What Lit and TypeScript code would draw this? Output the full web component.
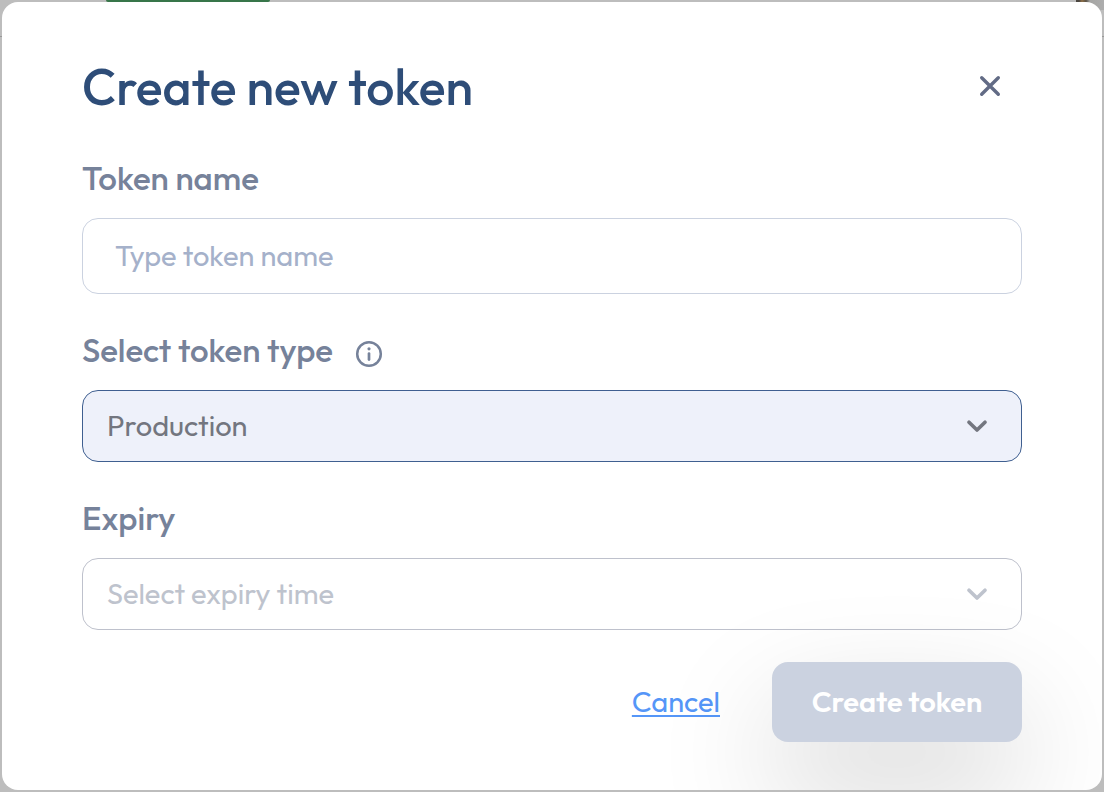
import { LitElement, html, css } from "lit";
import { customElement, property, state } from "lit/decorators.js";

const chevron = html`<svg class="chevron" width="24" height="24" viewBox="0 0 24 24" fill="none" aria-hidden="true">
  <path d="M4 8.2 12 16l8-7.8" stroke="currentColor" stroke-width="3.7" stroke-linecap="round" stroke-linejoin="round" />
</svg>`;

@customElement("token-dialog")
export class TokenDialog extends LitElement {
  @property() heading = "Create new token";
  @state() private name = "";
  @state() private expiry = "";

  static styles = css`
    :host {
      display: block;
      font-family: Outfit, Lato, sans-serif;
    }
    .dialog {
      box-sizing: border-box;
      min-height: 100%;
      padding: 54px 80px 48px;
      border-radius: 16px;
      background: #ffffff;
      overflow: hidden;
    }
    .header {
      display: flex;
      align-items: center;
      justify-content: space-between;
      padding-right: 16px;
      margin-bottom: 42px;
    }
    h1 {
      margin: 0;
      font-size: 50px;
      line-height: 62px;
      font-weight: 500;
      color: #2e4d78;
    }
    button {
      font: inherit;
      border: 0;
      cursor: pointer;
    }
    .close {
      display: grid;
      place-items: center;
      width: 32px;
      height: 32px;
      margin-bottom: 2px;
      padding: 0;
      background: none;
      color: #626b85;
    }
    form {
      display: flex;
      flex-direction: column;
      gap: 38px;
    }
    .field {
      display: flex;
      flex-direction: column;
      gap: 22px;
    }
    .caption {
      display: flex;
      align-items: center;
      gap: 22px;
      color: #76829a;
    }
    .caption svg {
      margin-top: 8px;
    }
    label {
      font-size: 33px;
      line-height: 36px;
      font-weight: 500;
    }
    input,
    select {
      box-sizing: border-box;
      width: 100%;
      margin: 0;
      border: 1px solid #cbd2e0;
      border-radius: 16px;
      outline: none;
      appearance: none;
      background: transparent;
      font: inherit;
      font-size: 29px;
    }
    input {
      height: 76px;
      padding: 0 32px 2px;
      color: #2e4d78;
    }
    input::placeholder {
      color: #a5b1ca;
      opacity: 1;
    }
    .picker {
      display: grid;
      align-items: center;
      color: #73767f;
    }
    .picker > * {
      grid-area: 1 / 1;
    }
    select {
      height: 72px;
      padding: 0 72px 2px 24px;
      color: inherit;
      border-color: #bec1cc;
    }
    .chosen select {
      background: #eef1fa;
      border-color: #3f5f90;
    }
    .empty {
      color: #bec3cd;
    }
    .chevron {
      justify-self: end;
      margin-right: 33px;
      pointer-events: none;
    }
    .actions {
      display: flex;
      align-items: center;
      justify-content: flex-end;
      gap: 52px;
      margin-top: -6px;
      font-size: 29px;
    }
    .cancel {
      padding-bottom: 2px;
      color: #5596f8;
      text-decoration: underline;
      text-decoration-thickness: 2px;
      text-underline-offset: 3px;
    }
    .submit {
      width: 250px;
      height: 80px;
      padding: 0 0 2px;
      border-radius: 16px;
      background: #cbd2e0;
      color: #ffffff;
      font-weight: 600;
      box-shadow: 0 50px 120px rgba(0, 0, 0, 0.18);
    }
  `;

  render() {
    return html`
      <section class="dialog" role="dialog" aria-labelledby="heading">
        <header class="header">
          <h1 id="heading">${this.heading}</h1>
          <button class="close" type="button" aria-label="Close">
            <svg width="24" height="24" viewBox="0 0 24 24" fill="none" aria-hidden="true">
              <path d="M3.7 3.7l16.6 16.6M20.3 3.7 3.7 20.3" stroke="currentColor" stroke-width="3.4" stroke-linecap="round" />
            </svg>
          </button>
        </header>
        <form @submit=${(e: Event) => e.preventDefault()}>
          <div class="field">
            <div class="caption"><label for="name">Token name</label></div>
            <input
              id="name"
              type="text"
              placeholder="Type token name"
              .value=${this.name}
              @input=${(e: Event) => (this.name = (e.target as HTMLInputElement).value)}
            />
          </div>
          <div class="field">
            <div class="caption">
              <label for="type">Select token type</label>
              <svg width="28" height="28" viewBox="0 0 28 28" fill="none" aria-hidden="true">
                <circle cx="14" cy="14" r="11.8" stroke="currentColor" stroke-width="2.5" />
                <circle cx="14" cy="8.8" r="1.6" fill="currentColor" />
                <path d="M14 13.6v6" stroke="currentColor" stroke-width="2.7" stroke-linecap="round" />
              </svg>
            </div>
            <div class="picker chosen">
              <select id="type">
                <option>Production</option>
                <option>Development</option>
              </select>
              ${chevron}
            </div>
          </div>
          <div class="field">
            <div class="caption"><label for="expiry">Expiry</label></div>
            <div class="picker ${this.expiry ? "" : "empty"}">
              <select id="expiry" @change=${(e: Event) => (this.expiry = (e.target as HTMLSelectElement).value)}>
                <option value="">Select expiry time</option>
                <option value="30">30 days</option>
                <option value="90">90 days</option>
              </select>
              ${chevron}
            </div>
          </div>
          <div class="actions">
            <a class="cancel" href="#">Cancel</a>
            <button class="submit" type="submit">Create token</button>
          </div>
        </form>
      </section>
    `;
  }
}

@customElement("app-root")
export class AppRoot extends LitElement {
  static styles = css`
    :host {
      display: grid;
      min-height: 100vh;
      background: #bdbdbd;
    }
    :host > * {
      grid-area: 1 / 1;
    }
    .topbar {
      display: flex;
      justify-content: space-between;
      align-self: start;
      height: 36px;
      padding: 0 0 0 106px;
      border-bottom: 1px solid #999999;
    }
    .tab {
      width: 164px;
      height: 2px;
      border-radius: 0 0 8px 8px;
      background: #38764a;
    }
    .avatar {
      width: 28px;
      height: 10px;
      background: linear-gradient(90deg, #4a4640 0 3px, #8f7048 6px, #5b5347 10px, #a5a5a3 14px, #adadad);
    }
    token-dialog {
      margin: 2px;
    }
  `;

  render() {
    return html`
      <div class="topbar">
        <div class="tab"></div>
        <div class="avatar"></div>
      </div>
      <token-dialog></token-dialog>
    `;
  }
}
